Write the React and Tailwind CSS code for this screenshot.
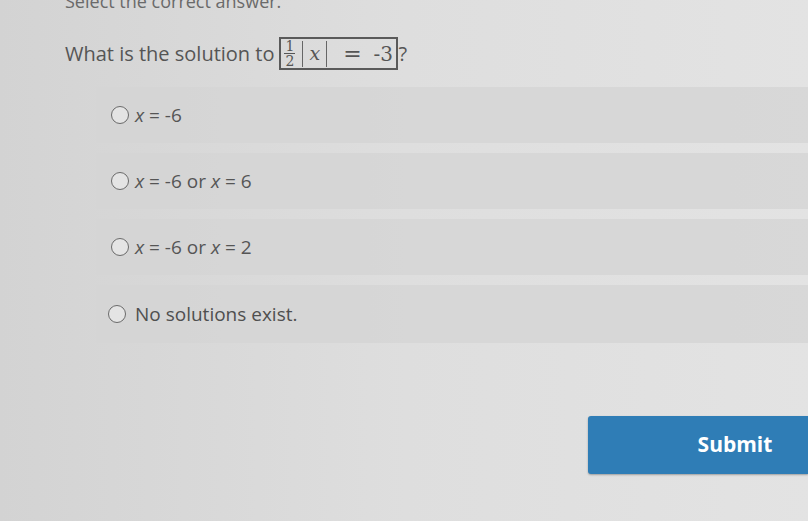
import React from "react";

function Radio() {
  return (
    <span className="inline-block w-[18px] h-[18px] rounded-full border-[1.5px] border-[#6a6a6a] bg-[#e4e4e4] shrink-0" />
  );
}

function X() {
  return <span className="italic">x</span>;
}

const options = [
  <>
    <X /> = -6
  </>,
  <>
    <X /> = -6 or <X /> = 6
  </>,
  <>
    <X /> = -6 or <X /> = 2
  </>,
];

const serif = { fontFamily: '"DejaVu Serif", serif' };

export default function App() {
  return (
    <div
      className="w-[808px] h-[521px] overflow-hidden bg-gradient-to-r from-[#d3d3d3] via-[#dedede] to-[#e3e3e3] text-[#555]"
      style={{ fontFamily: '"Open Sans", "Noto Sans", sans-serif' }}
    >
      <div className="pl-[65px] -mt-[11px] text-[18px] leading-[24px] text-[#6a6a6a]">
        Select the correct answer.
      </div>
      <div className="pl-[65px] mt-[24px] flex items-center text-[20px] leading-[28px]">
        <span>What is the solution to</span>
        <span className="ml-[5px] inline-flex items-center h-[33px] w-[119px] border-2 border-[#5a5a5a] pl-[3px] text-[#555]">
          <span className="flex flex-col items-center leading-none text-[14px]" style={serif}>
            <span className="border-b-[1.5px] border-[#555] px-[1px]">1</span>
            <span>2</span>
          </span>
          <span className="ml-[7px] h-[26px] border-l-[1.5px] border-[#666]" />
          <span className="px-[6px] text-[19px] italic leading-none" style={serif}>x</span>
          <span className="h-[26px] border-l-[1.5px] border-[#666]" />
          <span className="ml-[16px] text-[22px] leading-none" style={serif}>=</span>
          <span className="ml-[12px] text-[20px] leading-none" style={serif}>-3</span>
        </span>
        <span>?</span>
      </div>

      <div className="mt-[17px] ml-[96px] flex flex-col gap-[10px]">
        {options.map((o, i) => (
          <div
            key={i}
            className="h-[56px] flex items-center gap-[6px] pl-[15px] bg-[#d5d5d5]/80 text-[19px]"
          >
            <Radio />
            <span>{o}</span>
          </div>
        ))}
        <div className="h-[58px] flex items-center gap-[9px] pl-[12px] bg-[#d5d5d5]/80 text-[19px] text-[#4f4f4f]">
          <Radio />
          <span>No solutions exist.</span>
        </div>
      </div>

      <div className="mt-[73px] ml-[588px] h-[58px] rounded-l-[3px] bg-[#2f7db6] flex items-center justify-center text-white font-bold text-[21px] pl-[80px] pr-[6px] shadow-[0_1px_2px_rgba(0,0,0,0.3)]">
        Submit
      </div>
    </div>
  );
}
